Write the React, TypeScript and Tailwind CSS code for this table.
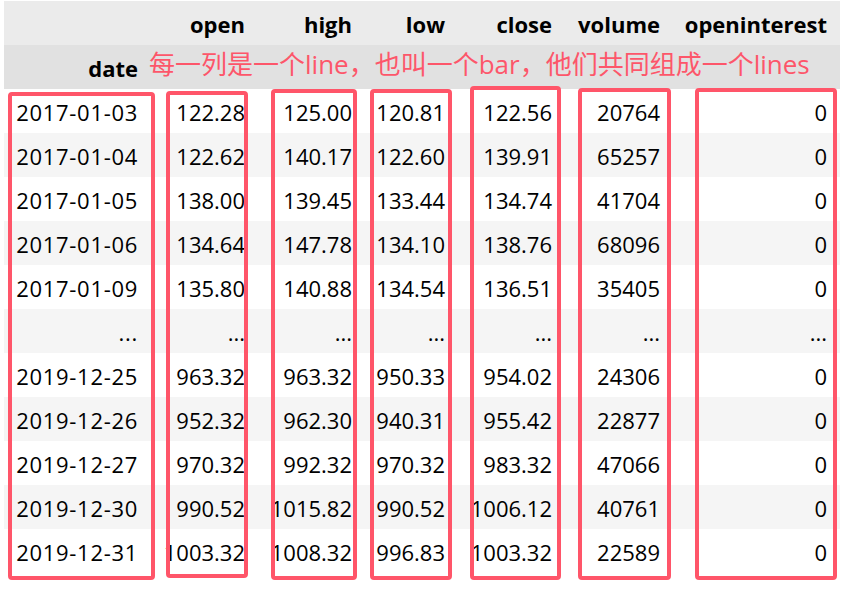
import React from 'react';

const columns = ['open', 'high', 'low', 'close', 'volume', 'openinterest'];

const rows: string[][] = [
  ['2017-01-03', '122.28', '125.00', '120.81', '122.56', '20764', '0'],
  ['2017-01-04', '122.62', '140.17', '122.60', '139.91', '65257', '0'],
  ['2017-01-05', '138.00', '139.45', '133.44', '134.74', '41704', '0'],
  ['2017-01-06', '134.64', '147.78', '134.10', '138.76', '68096', '0'],
  ['2017-01-09', '135.80', '140.88', '134.54', '136.51', '35405', '0'],
  ['...', '...', '...', '...', '...', '...', '...'],
  ['2019-12-25', '963.32', '963.32', '950.33', '954.02', '24306', '0'],
  ['2019-12-26', '952.32', '962.30', '940.31', '955.42', '22877', '0'],
  ['2019-12-27', '970.32', '992.32', '970.32', '983.32', '47066', '0'],
  ['2019-12-30', '990.52', '1015.82', '990.52', '1006.12', '40761', '0'],
  ['2019-12-31', '1003.32', '1008.32', '996.83', '1003.32', '22589', '0'],
];

// red annotation frames drawn on top of each column
const frames = [
  'left-[8px] top-[92px] w-[147px] h-[488px]',
  'left-[166px] top-[91px] w-[82px] h-[487px]',
  'left-[271px] top-[89px] w-[86px] h-[491px]',
  'left-[370px] top-[89px] w-[82px] h-[491px]',
  'left-[470px] top-[86px] w-[91px] h-[494px]',
  'left-[578px] top-[88px] w-[93px] h-[492px]',
  'left-[695px] top-[88px] w-[142px] h-[492px]',
];

const App: React.FC = () => {
  return (
    <div className="relative w-[854px] h-[594px] bg-white pl-1 pt-px font-['Open_Sans','Noto_Sans_CJK_SC',sans-serif] text-[22px] text-black">
      <table className="table-fixed border-collapse w-[836px]">
        <colgroup>
          <col className="w-[147px]" />
          <col className="w-[107px]" />
          <col className="w-[107px]" />
          <col className="w-[93px]" />
          <col className="w-[107px]" />
          <col className="w-[108px]" />
          <col className="w-[167px]" />
        </colgroup>
        <thead>
          {/* column names */}
          <tr className="h-[44px] bg-[#ebebeb]">
            <th className="pr-[13px]"></th>
            {columns.map((c) => (
              <th key={c} className="text-right font-bold pr-[13px] pt-[1px] leading-none whitespace-nowrap">
                {c}
              </th>
            ))}
          </tr>
          {/* index name + note */}
          <tr className="h-[44px] bg-[#e1e1e1]">
            <th className="text-right font-bold pr-[13px] pt-[1px] leading-none">date</th>
            <td colSpan={6} className="text-left pb-[7px] leading-none whitespace-nowrap">
              <span className="-ml-[2px] text-[26px] text-[#fd566a]">
                每一列是一个line，也叫一个bar，他们共同组成一个lines
              </span>
            </td>
          </tr>
        </thead>
        <tbody>
          {rows.map((r, i) => (
            <tr key={i} className={i % 2 === 1 ? 'h-[44px] bg-[#f5f5f5]' : 'h-[44px] bg-white'}>
              {r.map((v, j) => (
                <td
                  key={j}
                  className={
                    j === 0
                      ? 'text-right pr-[13px] pt-[1px] leading-none whitespace-nowrap tracking-[0.7px]'
                      : 'text-right pr-[13px] pt-[1px] leading-none whitespace-nowrap'
                  }
                >
                  {v}
                </td>
              ))}
            </tr>
          ))}
        </tbody>
      </table>

      {frames.map((f, i) => (
        <div key={i} className={`absolute ${f} border-4 border-[#ff5569] rounded-[4px] pointer-events-none`} />
      ))}
    </div>
  );
};

export default App;
